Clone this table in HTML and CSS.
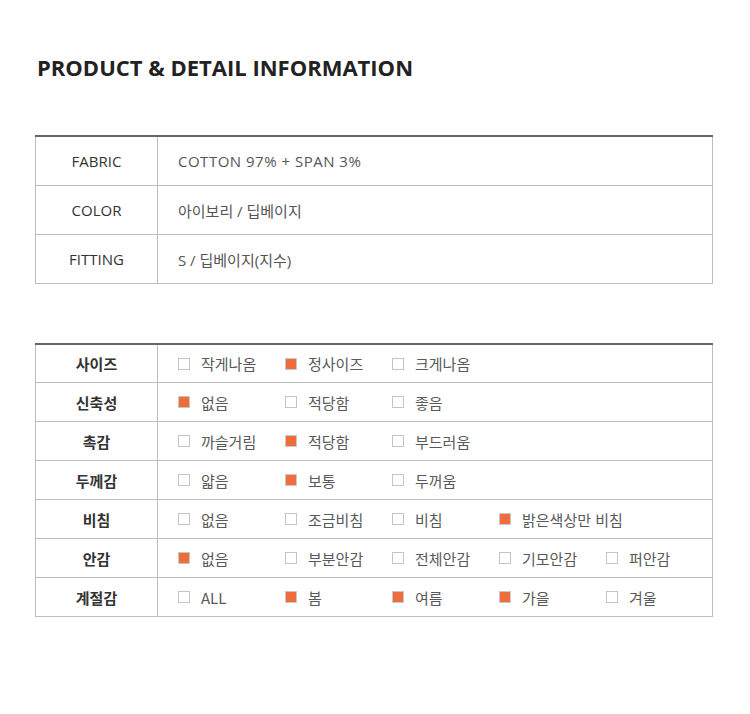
FILE: index.html
```html
<!DOCTYPE html>
<html lang="ko">
<head>
<meta charset="utf-8">
<title>Product &amp; Detail Information</title>
<link rel="stylesheet" href="styles.css">
</head>
<body>
<div class="page">
  <h1 class="title">PRODUCT &amp; DETAIL INFORMATION</h1>

  <table class="info">
    <tr><th>FABRIC</th><td class="latin">COTTON 97% + SPAN 3%</td></tr>
    <tr><th>COLOR</th><td>아이보리 / 딥베이지</td></tr>
    <tr><th>FITTING</th><td>S / 딥베이지(지수)</td></tr>
  </table>

  <table class="detail">
    <tr><th>사이즈</th><td><div class="opts">
      <span class="opt"><i class="box"></i>작게나옴</span>
      <span class="opt"><i class="box on"></i>정사이즈</span>
      <span class="opt"><i class="box"></i>크게나옴</span>
    </div></td></tr>
    <tr><th>신축성</th><td><div class="opts">
      <span class="opt"><i class="box on"></i>없음</span>
      <span class="opt"><i class="box"></i>적당함</span>
      <span class="opt"><i class="box"></i>좋음</span>
    </div></td></tr>
    <tr><th>촉감</th><td><div class="opts">
      <span class="opt"><i class="box"></i>까슬거림</span>
      <span class="opt"><i class="box on"></i>적당함</span>
      <span class="opt"><i class="box"></i>부드러움</span>
    </div></td></tr>
    <tr><th>두께감</th><td><div class="opts">
      <span class="opt"><i class="box"></i>얇음</span>
      <span class="opt"><i class="box on"></i>보통</span>
      <span class="opt"><i class="box"></i>두꺼움</span>
    </div></td></tr>
    <tr><th>비침</th><td><div class="opts">
      <span class="opt"><i class="box"></i>없음</span>
      <span class="opt"><i class="box"></i>조금비침</span>
      <span class="opt"><i class="box"></i>비침</span>
      <span class="opt wide"><i class="box on"></i>밝은색상만 비침</span>
    </div></td></tr>
    <tr><th>안감</th><td><div class="opts">
      <span class="opt"><i class="box on"></i>없음</span>
      <span class="opt"><i class="box"></i>부분안감</span>
      <span class="opt"><i class="box"></i>전체안감</span>
      <span class="opt"><i class="box"></i>기모안감</span>
      <span class="opt"><i class="box"></i>퍼안감</span>
    </div></td></tr>
    <tr><th>계절감</th><td><div class="opts">
      <span class="opt"><i class="box"></i>ALL</span>
      <span class="opt"><i class="box on"></i>봄</span>
      <span class="opt"><i class="box on"></i>여름</span>
      <span class="opt"><i class="box on"></i>가을</span>
      <span class="opt"><i class="box"></i>겨울</span>
    </div></td></tr>
  </table>
</div>
</body>
</html>
```

FILE: styles.css
```css
html, body {
  margin: 0;
  padding: 0;
  background: #ffffff;
}

.page {
  padding: 53px 0 0 35px;
  width: 678px;
  font-family: "Open Sans", "Noto Sans CJK KR", sans-serif;
  color: #333;
}

.title {
  margin: 0 0 0 2px;
  font-family: "Open Sans", "Noto Sans CJK KR", sans-serif;
  font-size: 22px;
  font-weight: 700;
  line-height: 28px;
  color: #222;
  letter-spacing: 0;
}

table {
  width: 678px;
  border-collapse: collapse;
  table-layout: fixed;
}

th, td {
  border: 1px solid #bdbdbd;
  padding: 0;
  vertical-align: middle;
}

tr:first-child th, tr:first-child td {
  border-top: 2px solid #666;
}

th {
  width: 121px;
  text-align: center;
}

.info {
  margin-top: 54px;
}

.info th {
  height: 48px;
  font-weight: 400;
  font-size: 15px;
  color: #333;
}

.info td {
  height: 48px;
  padding-left: 20px;
  font-size: 15px;
  color: #555;
}

.info td.latin {
  letter-spacing: 0.5px;
}

.detail {
  margin-top: 59px;
}

.detail th {
  height: 38px;
  font-family: "Noto Sans CJK KR", sans-serif;
  font-size: 15px;
  font-weight: 700;
  color: #333;
}

.detail tr:first-child th,
.detail tr:first-child td {
  height: 37px;
}

.detail td {
  height: 38px;
  padding-left: 20px;
}

.opts {
  display: flex;
  align-items: center;
}

.opt {
  display: flex;
  align-items: center;
  width: 107px;
  flex: none;
  font-family: "Noto Sans CJK KR", sans-serif;
  font-size: 15px;
  color: #595959;
  white-space: nowrap;
}

.opt.wide {
  width: auto;
}

.box {
  display: block;
  width: 10px;
  height: 10px;
  border: 1px solid #c4c4c4;
  background: #fff;
  margin-right: 11px;
}

.box.on {
  background: #ef6d3c;
  border-color: #c9c9c9;
}
```
